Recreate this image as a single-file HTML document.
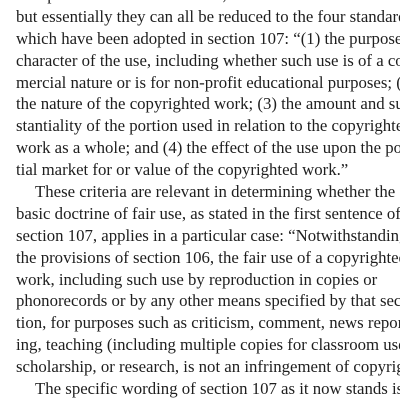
<!DOCTYPE html>
<html><head><meta charset="utf-8"><style>
html,body{margin:0;padding:0;background:#fff;width:400px;height:400px;overflow:hidden}
.t{position:absolute;left:16px;top:-16px;width:384px;overflow:hidden;font-family:"Liberation Serif",serif;font-size:16.8px;line-height:21.9px;color:#1e1e1e;white-space:nowrap}
.t div{height:21.9px;overflow:hidden}
.i{padding-left:19px}
</style></head><body><div class="t">
<div>the specific criteria for fair use, in addition to the</div>
<div>but essentially they can all be reduced to the four standards</div>
<div>which have been adopted in section 107: “(1) the purpose and</div>
<div>character of the use, including whether such use is of a com-</div>
<div>mercial nature or is for non-profit educational purposes; (2)</div>
<div>the nature of the copyrighted work; (3) the amount and sub-</div>
<div>stantiality of the portion used in relation to the copyrighted</div>
<div>work as a whole; and (4) the effect of the use upon the poten-</div>
<div>tial market for or value of the copyrighted work.”</div>
<div class="i">These criteria are relevant in determining whether the</div>
<div>basic doctrine of fair use, as stated in the first sentence of</div>
<div>section 107, applies in a particular case: “Notwithstanding</div>
<div>the provisions of section 106, the fair use of a copyrighted</div>
<div>work, including such use by reproduction in copies or</div>
<div>phonorecords or by any other means specified by that sec-</div>
<div>tion, for purposes such as criticism, comment, news report-</div>
<div>ing, teaching (including multiple copies for classroom use),</div>
<div>scholarship, or research, is not an infringement of copyright.”</div>
<div class="i">The specific wording of section 107 as it now stands is</div>
</div></body></html>
